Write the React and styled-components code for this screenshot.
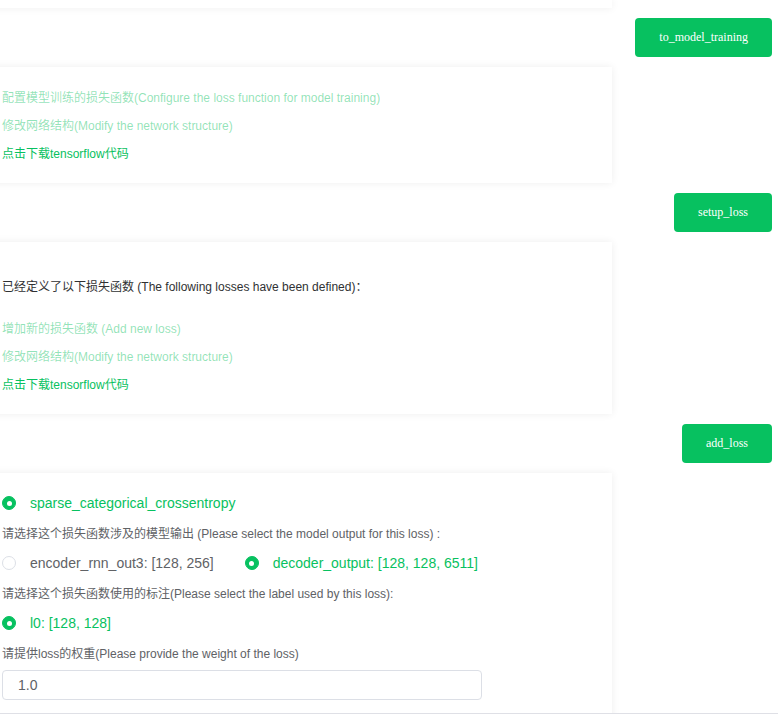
import React from 'react';
import styled, { createGlobalStyle } from 'styled-components';

const GREEN = '#07c160';

const GlobalStyle = createGlobalStyle`
  html, body {
    margin: 0;
    padding: 0;
    background: #fff;
    overflow: hidden;
  }
  body {
    font-family: "Liberation Sans", Arial, "Noto Sans CJK SC", sans-serif;
  }
`;

const Shell = styled.div`
  height: 100vh;
  display: flex;
  flex-direction: column;
  overflow: hidden;
`;

const Viewport = styled.div`
  flex: 1;
  overflow: hidden;
`;

// page is scrolled a bit to the right, so cards start left of the window
const Flow = styled.div`
  display: flex;
  flex-direction: column;
  gap: 10px;
  margin: 0 6px 0 -20px;
`;

const Card = styled.div`
  width: calc(100% - 160px);
  box-sizing: border-box;
  background: #fff;
  box-shadow: 0 0 8px rgba(0, 0, 0, 0.07);
  padding: ${(p) => (p.$form ? '15px 22px 40px' : '17px 22px 15px')};
`;

// bottom edge of the previous card, the rest is scrolled out of view
const CardTail = styled(Card)`
  height: 8px;
  padding: 0;
`;

const LinkLine = styled.div`
  font-size: 12px;
  line-height: 28px;
  color: ${(p) => (p.$strong ? GREEN : 'rgba(7, 193, 96, 0.45)')};
  cursor: pointer;
`;

const Heading = styled.div`
  font-size: 12px;
  line-height: 28px;
  margin: 14px 0;
  color: #303133;
`;

const ButtonRow = styled.div`
  display: flex;
  justify-content: flex-end;
`;

const StepButton = styled.button`
  height: 39px;
  padding: 0 24px;
  border: none;
  border-radius: 4px;
  background: ${GREEN};
  color: #fff;
  font-family: "Liberation Serif", "Times New Roman", serif;
  font-size: 12px;
  cursor: pointer;
`;

const Row = styled.div`
  display: flex;
  align-items: center;
  height: 30px;
`;

const Label = styled.div`
  font-size: 12px;
  padding-bottom: 2px;
  color: #606266;
`;

const RadioItem = styled.label`
  display: flex;
  align-items: center;
  gap: 14px;
  margin-right: 31px;
  font-size: 14px;
  color: ${(p) => (p.$checked ? GREEN : '#606266')};
  cursor: pointer;
`;

const RadioDot = styled.span`
  width: 14px;
  height: 14px;
  box-sizing: border-box;
  border-radius: 50%;
  border: 1px solid ${(p) => (p.$checked ? GREEN : '#dcdfe6')};
  background: ${(p) => (p.$checked ? GREEN : '#fff')};
  display: flex;
  align-items: center;
  justify-content: center;

  &::after {
    content: '';
    width: 5px;
    height: 5px;
    border-radius: 50%;
    background: #fff;
    display: ${(p) => (p.$checked ? 'block' : 'none')};
  }
`;

const WeightInput = styled.input`
  margin-top: 2px;
  width: 480px;
  height: 30px;
  box-sizing: border-box;
  border: 1px solid #dcdfe6;
  border-radius: 4px;
  padding: 0 15px;
  font-family: inherit;
  font-size: 14px;
  color: #606266;
  outline: none;
`;

const Footer = styled.div`
  height: 10px;
  border-top: 1px solid #dfe0e6;
  background: #fff;
`;

const Radio = ({ checked, children }) => (
  <RadioItem $checked={checked}>
    <RadioDot $checked={checked} />
    {children}
  </RadioItem>
);

const App = () => (
  <>
    <GlobalStyle />
    <Shell>
      <Viewport>
        <Flow>
          <CardTail />
          <ButtonRow>
            <StepButton>to_model_training</StepButton>
          </ButtonRow>

          <Card>
            <LinkLine>配置模型训练的损失函数(Configure the loss function for model training)</LinkLine>
            <LinkLine>修改网络结构(Modify the network structure)</LinkLine>
            <LinkLine $strong>点击下载tensorflow代码</LinkLine>
          </Card>
          <ButtonRow>
            <StepButton>setup_loss</StepButton>
          </ButtonRow>

          <Card>
            <Heading>已经定义了以下损失函数 (The following losses have been defined)：</Heading>
            <LinkLine>增加新的损失函数 (Add new loss)</LinkLine>
            <LinkLine>修改网络结构(Modify the network structure)</LinkLine>
            <LinkLine $strong>点击下载tensorflow代码</LinkLine>
          </Card>
          <ButtonRow>
            <StepButton>add_loss</StepButton>
          </ButtonRow>

          <Card $form>
            <Row>
              <Radio checked>sparse_categorical_crossentropy</Radio>
            </Row>
            <Row>
              <Label>请选择这个损失函数涉及的模型输出 (Please select the model output for this loss) :</Label>
            </Row>
            <Row>
              <Radio>encoder_rnn_out3: [128, 256]</Radio>
              <Radio checked>decoder_output: [128, 128, 6511]</Radio>
            </Row>
            <Row>
              <Label>请选择这个损失函数使用的标注(Please select the label used by this loss):</Label>
            </Row>
            <Row>
              <Radio checked>l0: [128, 128]</Radio>
            </Row>
            <Row>
              <Label>请提供loss的权重(Please provide the weight of the loss)</Label>
            </Row>
            <WeightInput defaultValue="1.0" />
          </Card>
        </Flow>
      </Viewport>
      <Footer />
    </Shell>
  </>
);

export default App;
